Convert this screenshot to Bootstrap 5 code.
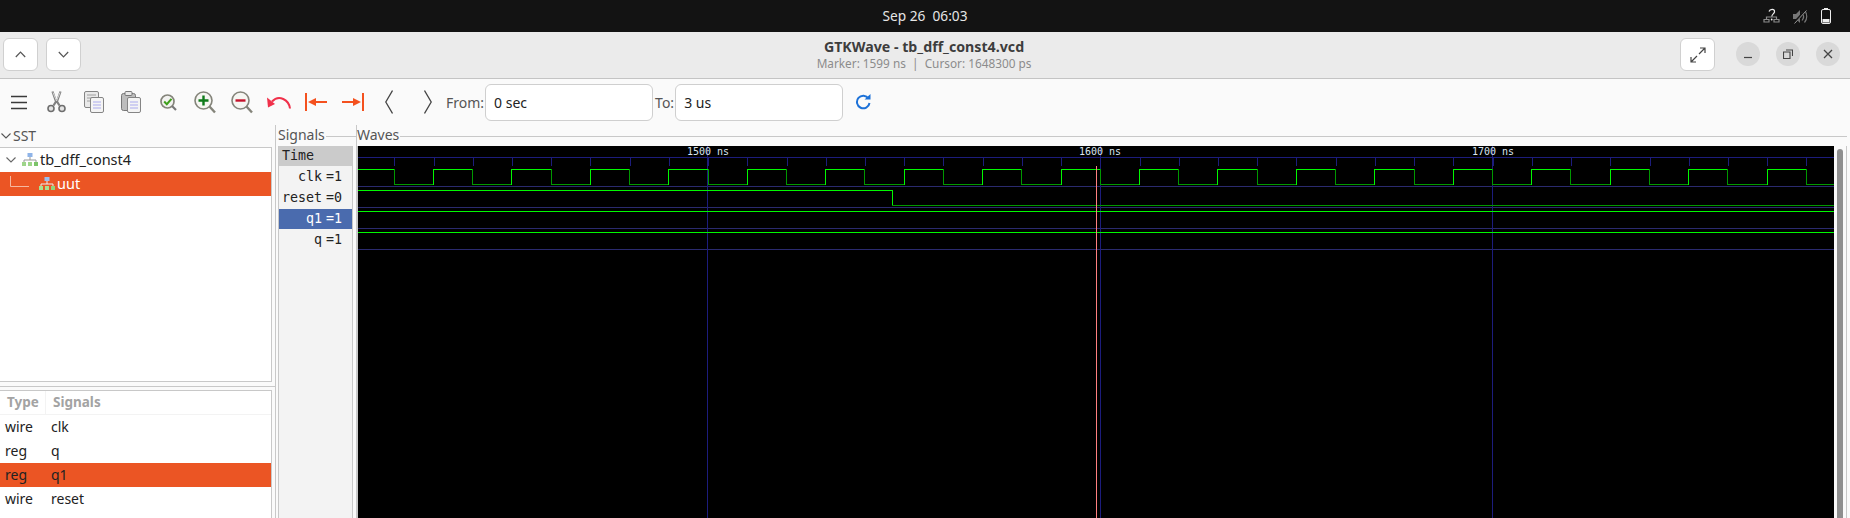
<!DOCTYPE html>
<html lang="en">
<head>
  <meta charset="UTF-8">
  <title>GTKWave - tb_dff_const4.vcd</title>
  <link href="https://cdn.jsdelivr.net/npm/bootstrap@5.3.0/dist/css/bootstrap.min.css" rel="stylesheet">
  <style>
    html, body { height: 518px; overflow: hidden; }
    body { font-family: "Noto Sans", sans-serif; background: #fafafa; color: #3d3d3d; }
    svg { display: block; flex: none; }

    /* gnome top bar */
    .top-strip { height: 32px; background: #131313; color: #e6e6e6; font-size: 13.7px; position: relative; }
    .top-tray { position: absolute; right: 19px; top: 8px; gap: 13px; }

    /* title bar */
    .title-strip { height: 47px; background: #ebebeb; border-bottom: 1px solid #c4c4c4; padding: 6px 0 0 3px; }
    .head-btn { width: 35px; height: 33px; padding: 0; background: #fff; border: 1px solid #d0d0d0; border-radius: 6px; }
    .title-text { width: 1512px; margin-left: 87px; line-height: 1; text-align: center; }
    .title-main { font-size: 14.2px; font-weight: 700; color: #3d3d3d; margin-top: 2px; }
    .title-sub { font-size: 11.8px; color: #8c8c8c; margin-top: 4px; }
    .win-group { margin-left: 21px; gap: 16px; }
    .win-btn { width: 24px; height: 24px; border-radius: 50%; background: #d9d9d9; margin-top: 4px; }

    /* toolbar */
    .tool-strip { height: 46px; padding-left: 11px; position: relative; }
    .tool-strip .form-control { width: 168px; height: 37px; border-radius: 6px; border-color: #cfcfcf; font-size: 14px; padding: 0 8px; color: #222; box-shadow: none; }
    .tool-label { font-size: 14px; color: #555; }
    .lbl-from { margin-right: 1px; }
    .lbl-to { margin: 0 1px 0 2px; }
    .ic-menu { margin-right: 20px; }
    .ic-cut { margin-right: 18px; }
    .ic-copy { margin-right: 17px; }
    .ic-paste { margin-right: 19px; }
    .ic-fit { margin-right: 17px; }
    .ic-in { margin-right: 15px; }
    .ic-out { margin-right: 14px; }
    .ic-undo { margin-right: 14px; }
    .ic-start { margin-right: 15px; }
    .ic-end { margin-right: 21px; }
    .ic-prev { margin-right: 31px; }
    .ic-next { margin-right: 14px; }
    .ic-reload { margin-left: 12px; }

    /* panes */
    .pane-row { height: 393px; }
    .pane-sst { width: 276px; border-right: 1px solid #c8c8c8; flex: none; }
    .pane-title { font-size: 14px; color: #555; height: 22px; line-height: 18px; }
    .ic-sst { margin: 0 2px 0 1px; }
    .sst-box { height: 235px; width: 272px; background: #fff; border: 1px solid #c8c8c8; border-left: 0; }
    .sst-row { height: 24px; font-size: 14.5px; color: #222; }
    .sel-row { background: #eb5524; color: #fff; }
    .ic-tree { margin: 0 6px; }
    .ic-branch { margin: -5px 10px 0; }
    .ic-mod { margin-right: 2px; }
    .pane-split { height: 1px; background: #c8c8c8; width: 275px; margin: 4px 0 3px; }
    .type-box { height: 129px; width: 272px; background: #fff; border: 1px solid #c8c8c8; border-left: 0; border-bottom: 0; }
    .type-head { height: 24px; border-bottom: 1px solid #f3f3f3; font-weight: 700; color: #a3a3a3; font-size: 13.5px; }
    .type-row { height: 24px; font-size: 14px; color: #222; padding-bottom: 2px; }
    .type-a { width: 51px; padding-left: 5px; flex: none; }
    .type-head .type-a { width: 46px; padding-left: 7px; border-right: 1px solid #f3f3f3; line-height: 23px; }
    .type-head .type-b { padding-left: 7px; line-height: 23px; }

    .pane-sig { width: 79px; margin-left: 2px; border-right: 1px solid #c8c8c8; flex: none; }
    .frame-head { height: 21px; font-size: 14px; color: #555; line-height: 20px; }
    .frame-line { flex: 1; height: 11px; border-top: 1px solid #c8c8c8; margin-top: 11px; margin-left: 1px; }
    .sig-box { width: 75px; height: 372px; background: #f3f3f3; border-right: 1px solid #c8c8c8; border-left: 1px solid #c8c8c8; }
    .sig-row { height: 20px; margin-bottom: 1px; font-family: "DejaVu Sans Mono", monospace; font-size: 13.3px; line-height: 20px; color: #222; padding-right: 10px; }
    .sig-row span:first-child { margin-right: 4px; }
    .sig-time { background: #cbcbcb; padding-left: 3px; padding-right: 0; }
    .sig-sel { background: #4a6bae; color: #fff; }

    .pane-wave { flex: 1; min-width: 0; padding-right: 3px; }
    .wave-frame { border-right: 1px solid #c8c8c8; border-left: 1px solid #c8c8c8; height: 372px; }
    .wave-scroll { width: 12px; background: #fafafa; padding: 3px 3px 0; }
    .wave-thumb { background: #8f8f8f; height: 100%; border-radius: 3px 3px 0 0; }
  </style>
</head>
<body>
  <!-- top bar -->
  <div class="top-strip d-flex align-items-center justify-content-center">
    <span>Sep 26&nbsp; 06:03</span>
    <div class="top-tray d-flex align-items-center">
      <svg width="17" height="16" viewBox="0 0 17 16" fill="none" stroke="#8a8a8a" stroke-width="1.2"><path d="M1 14V11.5H6V14ZM11 14V11.5H16V14ZM3.5 11V9H13.5V11" /><path d="M6 3.5C7 .5 12 .5 11.5 4C11 6 9 6 8.8 8.5" stroke="#eee"/><circle cx="8.7" cy="11.5" r=".9" fill="#eee" stroke="none"/></svg>
      <svg width="15" height="15" viewBox="0 0 15 15" fill="#777"><path d="M0 5H3L7 1V14L3 10H0Z"/><path d="M9 3.5C11 6 11 9 9 11.5M11.5 1.5C14.5 5 14.5 10 11.5 13.5" fill="none" stroke="#777" stroke-width="1.2"/><path d="M1 14L13 1" stroke="#131313" stroke-width="2.5"/><path d="M1.5 14.5L13.5 1.5" stroke="#999" stroke-width="1"/></svg>
      <svg width="10" height="16" viewBox="0 0 10 16"><rect x=".5" y="1.5" width="9" height="14" rx="1.5" fill="none" stroke="#eee"/><rect x="3" y="0" width="4" height="1.5" fill="#eee"/><rect x="1.5" y="11" width="7" height="3.5" fill="#eee"/></svg>
    </div>
  </div>

  <!-- title bar -->
  <div class="title-strip d-flex align-items-start">
    <button class="btn head-btn d-flex align-items-center justify-content-center me-2" type="button">
      <svg width="11" height="7" viewBox="0 0 11 7" fill="none" stroke="#555" stroke-width="1.2"><path d="M.8 6L5.5 1.2L10.2 6"/></svg>
    </button>
    <button class="btn head-btn d-flex align-items-center justify-content-center" type="button">
      <svg width="11" height="7" viewBox="0 0 11 7" fill="none" stroke="#555" stroke-width="1.2"><path d="M.8 1L5.5 5.8L10.2 1"/></svg>
    </button>
    <div class="title-text flex-shrink-0">
      <div class="title-main">GTKWave - tb_dff_const4.vcd</div>
      <div class="title-sub">Marker: 1599 ns&nbsp; |&nbsp; Cursor: 1648300 ps</div>
    </div>
    <button class="btn head-btn d-flex align-items-center justify-content-center" type="button">
      <svg width="16" height="16" viewBox="0 0 16 16" fill="none" stroke="#444" stroke-width="1.2"><path d="M9 7L15 1M10 1H15V6M7 9L1 15M1 10V15H6"/></svg>
    </button>
    <div class="win-group d-flex">
      <div class="win-btn d-flex align-items-center justify-content-center"><svg width="10" height="10" viewBox="0 0 10 10" stroke="#444" stroke-width="1.2"><path d="M1 8.5H9"/></svg></div>
      <div class="win-btn d-flex align-items-center justify-content-center"><svg width="10" height="10" viewBox="0 0 10 10" fill="none" stroke="#444" stroke-width="1.1"><path d="M.5 3H7V9.5H.5ZM3 1H9.5V7"/></svg></div>
      <div class="win-btn d-flex align-items-center justify-content-center"><svg width="10" height="10" viewBox="0 0 10 10" stroke="#444" stroke-width="1.3"><path d="M1 1L9 9M9 1L1 9"/></svg></div>
    </div>
  </div>

  <!-- toolbar -->
  <div class="tool-strip d-flex align-items-center">
    <svg class="ic-menu" width="16" height="15" viewBox="0 0 16 15" stroke="#3a3a3a" stroke-width="1.4"><path d="M0 1.5H16M0 7.5H16M0 13.5H16"/></svg>
    <!-- cut -->
    <svg class="ic-cut" width="19" height="22" viewBox="0 0 19 22" fill="none"><path d="M5.5 .5L9 10.5L6.5 14.5M13.5 .5L10 10.5L12.5 14.5" stroke="#808080" stroke-width="2.2"/><path d="M6 1.5L9.5 10L13 1.5" stroke="#d6d6d6"/><circle cx="4" cy="17.5" r="3" stroke="#6e6e6e" stroke-width="1.6" fill="#e4e4e4"/><circle cx="15" cy="17.5" r="3" stroke="#6e6e6e" stroke-width="1.6" fill="#e4e4e4"/></svg>
    <!-- copy -->
    <svg class="ic-copy" width="20" height="22" viewBox="0 0 20 22"><rect x=".5" y=".5" width="14" height="16" rx="1.5" fill="#e9e9e9" stroke="#858585"/><path d="M3 4H12M3 7H12M3 10H6" stroke="#a0a0a0"/><rect x="6.5" y="6.5" width="13" height="15" rx="1.5" fill="#f4f4f4" stroke="#858585"/><path d="M9 11H17M9 14H17M9 17H17" stroke="#aaaaee"/></svg>
    <!-- paste -->
    <svg class="ic-paste" width="20" height="22" viewBox="0 0 20 22"><rect x=".5" y="2.5" width="14" height="17" rx="2" fill="#bdbdbd" stroke="#777"/><rect x="4" y=".5" width="7" height="4" rx="1" fill="#e8e8e8" stroke="#777"/><rect x="6.5" y="6.5" width="13" height="15" rx="1.5" fill="#f4f4f4" stroke="#858585"/><path d="M9 11H17M9 14H17M9 17H17" stroke="#aaaaee"/></svg>
    <!-- zoom fit -->
    <svg class="ic-fit" width="17" height="17" viewBox="0 0 17 17" fill="none"><circle cx="7.5" cy="7.5" r="6.5" fill="#f2f2f0" stroke="#84847a" stroke-width="1.7"/><path d="M12 12L16 16" stroke="#777" stroke-width="2.2"/><path d="M4.2 7.5L6.8 10.2L11.5 4.8" stroke="#3fa01c" stroke-width="2"/></svg>
    <!-- zoom in -->
    <svg class="ic-in" width="22" height="23" viewBox="0 0 22 23" fill="none"><circle cx="9.5" cy="9.5" r="8.5" fill="#f6f6f2" stroke="#84847a" stroke-width="1.6"/><path d="M15.5 15.5L21 21.5" stroke="#84847a" stroke-width="2.4"/><path d="M4.5 9.5H14.5M9.5 4.5V14.5" stroke="#0f7a1a" stroke-width="2.4"/></svg>
    <!-- zoom out -->
    <svg class="ic-out" width="22" height="23" viewBox="0 0 22 23" fill="none"><circle cx="9.5" cy="9.5" r="8.5" fill="#f6f6f2" stroke="#84847a" stroke-width="1.6"/><path d="M15.5 15.5L21 21.5" stroke="#84847a" stroke-width="2.4"/><path d="M4.5 9.5H14.5" stroke="#c4122a" stroke-width="2.4"/></svg>
    <!-- undo -->
    <svg class="ic-undo" width="24" height="13" viewBox="0 0 24 13" fill="none"><path d="M23 12.5C22 4 12 -2 5 5.5" stroke="#f0304a" stroke-width="2"/><path d="M0 1.5L8 8L1 11.5Z" fill="#f0304a"/></svg>
    <!-- to start -->
    <svg class="ic-start" width="22" height="18" viewBox="0 0 22 18" fill="none"><path d="M1 0V18" stroke="#f4511e" stroke-width="2"/><path d="M8 9H22" stroke="#f4511e" stroke-width="2"/><path d="M3 9L11 5V13Z" fill="#f4511e"/></svg>
    <!-- to end -->
    <svg class="ic-end" width="22" height="18" viewBox="0 0 22 18" fill="none"><path d="M21 0V18" stroke="#f4511e" stroke-width="2"/><path d="M0 9H14" stroke="#f4511e" stroke-width="2"/><path d="M19 9L11 5V13Z" fill="#f4511e"/></svg>
    <!-- page left / right -->
    <svg class="ic-prev" width="8" height="24" viewBox="0 0 8 24" fill="none" stroke="#444" stroke-width="1.3"><path d="M7.5 .5L.8 12L7.5 23.5"/></svg>
    <svg class="ic-next" width="8" height="24" viewBox="0 0 8 24" fill="none" stroke="#444" stroke-width="1.3"><path d="M.5 .5L7.2 12L.5 23.5"/></svg>
    <label class="tool-label lbl-from">From:</label>
    <input class="form-control" type="text" value="0 sec">
    <label class="tool-label lbl-to">To:</label>
    <input class="form-control" type="text" value="3 us">
    <svg class="ic-reload" width="16" height="16" viewBox="0 0 16 16" fill="none"><path d="M13.5 4.5A6.3 6.3 0 1 0 14.5 9" stroke="#1c71d8" stroke-width="2"/><path d="M9.5 5.5H15.5V0Z" fill="#1c71d8"/></svg>
  </div>

  <!-- panes -->
  <div class="pane-row d-flex">
    <div class="pane-sst">
      <div class="pane-title d-flex align-items-center">
        <svg class="ic-sst" width="10" height="6" viewBox="0 0 10 6" fill="none" stroke="#555" stroke-width="1.1"><path d="M.5 .5L5 5L9.5 .5"/></svg>SST
      </div>
      <div class="sst-box">
        <div class="sst-row d-flex align-items-center">
          <svg class="ic-tree" width="10" height="6" viewBox="0 0 10 6" fill="none" stroke="#666" stroke-width="1.1"><path d="M.5 .5L5 5L9.5 .5"/></svg>
          <svg class="ic-mod" width="16" height="14" viewBox="0 0 16 14"><rect x="5.5" y="0" width="5" height="4" fill="#8fb4e8"/><path d="M8 4V7M2 10V7H14V10" stroke="#999" fill="none"/><rect x="0" y="9" width="4" height="4" fill="#9ed58a"/><rect x="6" y="9" width="4" height="4" fill="#9ed58a"/><rect x="12" y="9" width="4" height="4" fill="#7cc46a"/></svg>
          <span>tb_dff_const4</span>
        </div>
        <div class="sst-row sel-row d-flex align-items-center">
          <svg class="ic-branch" width="19" height="11" viewBox="0 0 19 11" fill="none" stroke="#f6b8a0"><path d="M.5 0V10.5H19"/></svg>
          <svg class="ic-mod" width="16" height="14" viewBox="0 0 16 14"><rect x="5.5" y="0" width="5" height="4" fill="#9cc0f0"/><path d="M8 4V7M2 10V7H14V10" stroke="#eee" fill="none"/><rect x="0" y="9" width="4" height="4" fill="#a9e08f"/><rect x="6" y="9" width="4" height="4" fill="#a9e08f"/><rect x="12" y="9" width="4" height="4" fill="#8fd47a"/></svg>
          <span>uut</span>
        </div>
      </div>
      <div class="pane-split"></div>
      <div class="type-box">
        <div class="type-head d-flex">
          <div class="type-a">Type</div><div class="type-b">Signals</div>
        </div>
        <div id="typeRows"></div>
      </div>
    </div>

    <div class="pane-sig">
      <div class="frame-head d-flex"><span>Signals</span><span class="frame-line"></span></div>
      <div class="sig-box" id="sigRows"></div>
    </div>

    <div class="pane-wave">
      <div class="frame-head d-flex"><span>Waves</span><span class="frame-line"></span></div>
      <div class="wave-frame d-flex">
        <svg id="waves" width="1476" height="372" shape-rendering="crispEdges"></svg>
        <div class="wave-scroll"><div class="wave-thumb"></div></div>
      </div>
    </div>
  </div>

  <script>
    // signal lists
    const tipos = [["wire", "clk"], ["reg", "q"], ["reg", "q1", true], ["wire", "reset"]];
    document.getElementById("typeRows").innerHTML = tipos.map(t =>
      `<div class="type-row d-flex align-items-center ${t[2] ? "sel-row" : ""}"><div class="type-a">${t[0]}</div><div>${t[1]}</div></div>`
    ).join("");

    const senales = [["clk", "1"], ["reset", "0"], ["q1", "1", true], ["q", "1"]];
    document.getElementById("sigRows").innerHTML =
      `<div class="sig-row sig-time">Time</div>` +
      senales.map(s => `<div class="sig-row d-flex justify-content-end ${s[2] ? "sig-sel" : ""}"><span>${s[0]}</span><span>=${s[1]}</span></div>`).join("");

    // waveforms, coordinates are screen x minus the canvas origin (358,146)
    const X0 = 358, Y0 = 146, W = 1476, H = 372;
    const NAVY = "#1c1c7c", DIM = "#2a2a6e", HI = "#00f800", LO = "#009800";
    const PASO = 39.225;
    let s = "";
    const hline = (y, x1, x2, c) => s += `<path d="M${x1} ${y - Y0 + .5}H${x2}" stroke="${c}"/>`;
    const vline = (x, y1, y2, c) => s += `<path d="M${Math.round(x) - X0 + .5} ${y1 - Y0}V${y2 - Y0}" stroke="${c}"/>`;

    s += `<rect width="${W}" height="${H}" fill="#000"/>`;
    hline(157, 0, W, NAVY);
    for (const y of [186, 207, 228, 249]) hline(y, 0, W, DIM);
    for (let i = -1; i < 37; i++) vline(394.3 + i * PASO, 157, 166, NAVY);
    for (const x of [707, 1100, 1492]) vline(x, 146, 518, NAVY);

    // clk: starts high, toggles every 10 ns
    let clk = true, px = X0;
    for (let i = 0; i <= 37; i++) {
      const x = Math.min(Math.round(393.7 + i * PASO), X0 + W);
      hline(clk ? 169 : 184, px - X0, x - X0 + 1, clk ? HI : LO);
      if (x < X0 + W) vline(x, 169, 185, clk ? LO : HI);
      clk = !clk;
      px = x;
    }

    // reset falls at 892, q1 and q stay high
    hline(190, 0, 892 - X0, HI);
    vline(892, 190, 206, HI);
    hline(205, 892 - X0, W, LO);
    hline(211, 0, W, HI);
    hline(232, 0, W, HI);

    // marker
    vline(1096, 166, 518, "#ff8080");

    for (const [x, t] of [[708, "1500 ns"], [1100, "1600 ns"], [1493, "1700 ns"]])
      s += `<text x="${x - X0}" y="9" text-anchor="middle" fill="#dce6f0" font-family="DejaVu Sans Mono" font-size="10" shape-rendering="auto">${t}</text>`;
    document.getElementById("waves").innerHTML = s;
  </script>
  <script src="https://cdn.jsdelivr.net/npm/bootstrap@5.3.0/dist/js/bootstrap.bundle.min.js"></script>
</body>
</html>
